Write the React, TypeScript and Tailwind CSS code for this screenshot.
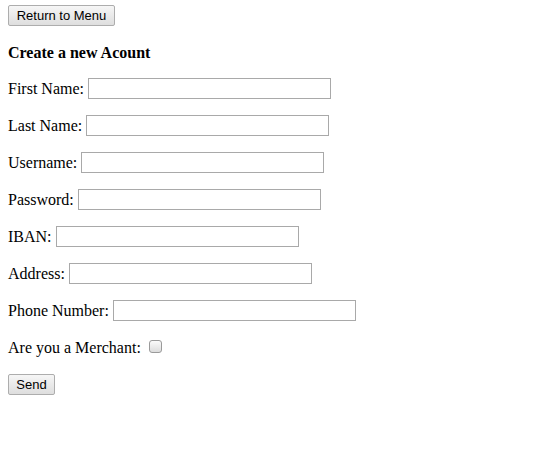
import React from 'react'

const FIELDS = ['First Name:', 'Last Name:', 'Username:', 'Password:', 'IBAN:', 'Address:', 'Phone Number:']

const btn =
  "block h-[21px] px-[7px] border border-[#adadad] rounded-[2px] bg-gradient-to-b from-[#f6f6f6] to-[#dedede] text-[13px] text-black leading-none font-['Liberation_Sans',Arial,sans-serif]"

export default function App() {
  return (
    <div className="w-[558px] h-[451px] bg-white px-2 pt-[5px] font-['Liberation_Serif','Times_New_Roman',serif] text-[16px] text-black">
      <div className="flex">
        <button className={`${btn} w-[107px]`}>Return to Menu</button>
      </div>

      <h3 className="mt-[17px] h-[20px] leading-[20px] text-[16px] font-bold">Create a new Acount</h3>

      <div className="mt-[15px] flex flex-col gap-4">
        {FIELDS.map((label) => (
          <div key={label} className="flex items-center h-[21px]">
            <span className="mr-[4px] whitespace-nowrap">{label}</span>
            <input
              type={label === 'Password:' ? 'password' : 'text'}
              className="w-[243px] h-[21px] border border-[#a9a9a9] bg-white outline-none"
            />
          </div>
        ))}
        <div className="flex items-center h-[21px]">
          <span className="whitespace-nowrap">Are you a Merchant:</span>
          <span className="ml-[8px] mt-[-3px] w-[13px] h-[13px] rounded-[3px] border border-[#9a9a9a] bg-gradient-to-b from-[#fbfbfb] to-[#dcdcdc]" />
        </div>
        <div className="flex items-center h-[21px]">
          <button className={`${btn} w-[47px]`}>Send</button>
        </div>
      </div>
    </div>
  )
}
